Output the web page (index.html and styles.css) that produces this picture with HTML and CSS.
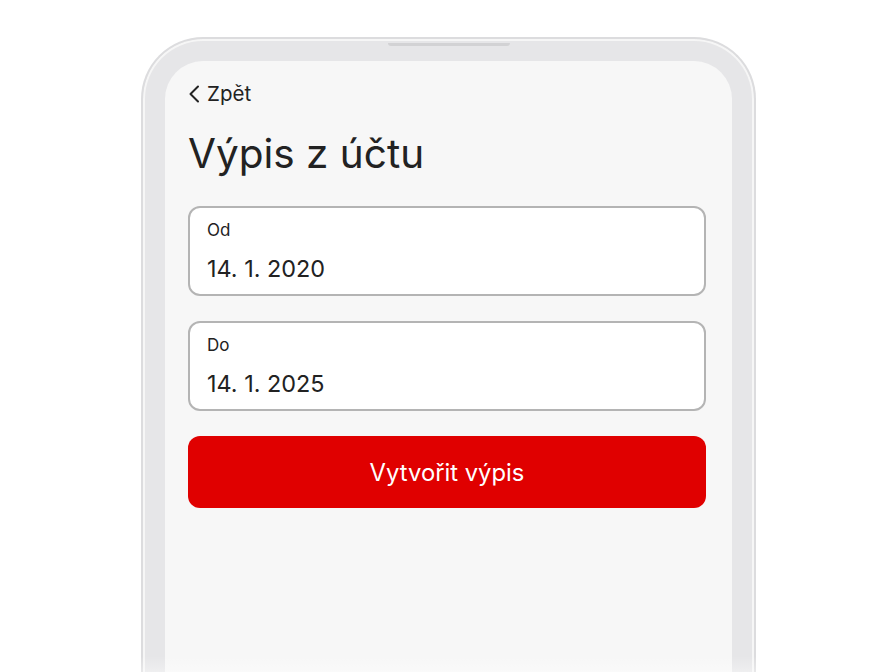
FILE: index.html
```html
<!DOCTYPE html>
<html lang="cs">
<head>
    <meta charset="UTF-8">
    <meta name="viewport" content="width=device-width, initial-scale=1.0">
    <title>Výpis z účtu</title>
    <link rel="stylesheet" href="styles.css">
</head>
<body>
    <div class="phone">
        <div class="notch"></div>
        <div class="screen">
            <a class="back-link">
                <svg class="back-icon" width="12" height="20" viewBox="0 0 12 20">
                    <path d="M10 2.5 L2.5 10 L10 17.5" fill="none" stroke="#222" stroke-width="2" stroke-linecap="round" stroke-linejoin="round"/>
                </svg>
                Zpět
            </a>
            <h1>Výpis z účtu</h1>
            <div class="field">
                <label>Od</label>
                <div class="field-value">14. 1. 2020</div>
            </div>
            <div class="field">
                <label>Do</label>
                <div class="field-value">14. 1. 2025</div>
            </div>
            <button class="submit-btn">Vytvořit výpis</button>
        </div>
        <div class="fade"></div>
    </div>
</body>
</html>
```

FILE: styles.css
```css
body {
    margin: 0;
    background-color: #ffffff;
    font-family: Inter, "Noto Sans", sans-serif;
    color: #222222;
    height: 672px;
    overflow: hidden;
}

.phone {
    position: relative;
    margin: 37px 0 0 141px;
    width: 567px;
    height: 640px;
    padding: 22px 22px 0 22px;
    border: 2px solid #dcdcde;
    border-bottom: none;
    border-radius: 62px 62px 0 0;
    background-color: #e6e6e8;
    box-shadow: inset 0 0 0 2px #f6f6f6;
}

.notch {
    position: absolute;
    top: 4px;
    left: 245px;
    width: 122px;
    height: 3px;
    border-radius: 0 0 3px 3px;
    background-color: #d2d2d4;
}

.screen {
    height: 100%;
    box-sizing: border-box;
    padding: 21px 26px 0 23px;
    background-color: #f7f7f7;
    border-radius: 38px 38px 0 0;
}

.back-link {
    display: flex;
    align-items: center;
    gap: 7px;
    font-size: 20.5px;
    line-height: 24px;
    color: #222222;
}

h1 {
    margin: 24px 0 28px 0;
    font-size: 40.5px;
    font-weight: 400;
    line-height: 48px;
    color: #222222;
}

.field {
    background-color: #ffffff;
    border: 2px solid #b4b4b4;
    border-radius: 12px;
    height: 90px;
    box-sizing: border-box;
    padding: 11px 17px 0 17px;
    margin-bottom: 25px;
}

.field label {
    display: block;
    font-size: 17px;
    line-height: 22px;
}

.field-value {
    margin-top: 14px;
    font-size: 23.4px;
    line-height: 28px;
}

.submit-btn {
    display: block;
    width: 100%;
    height: 72px;
    border: none;
    border-radius: 12px;
    background-color: #e00000;
    color: #ffffff;
    font-family: Inter, "Noto Sans", sans-serif;
    font-size: 23.8px;
}

.fade {
    position: absolute;
    left: -2px;
    right: -2px;
    bottom: 0;
    height: 45px;
    background: linear-gradient(to bottom, rgba(255, 255, 255, 0), #ffffff);
}
```
